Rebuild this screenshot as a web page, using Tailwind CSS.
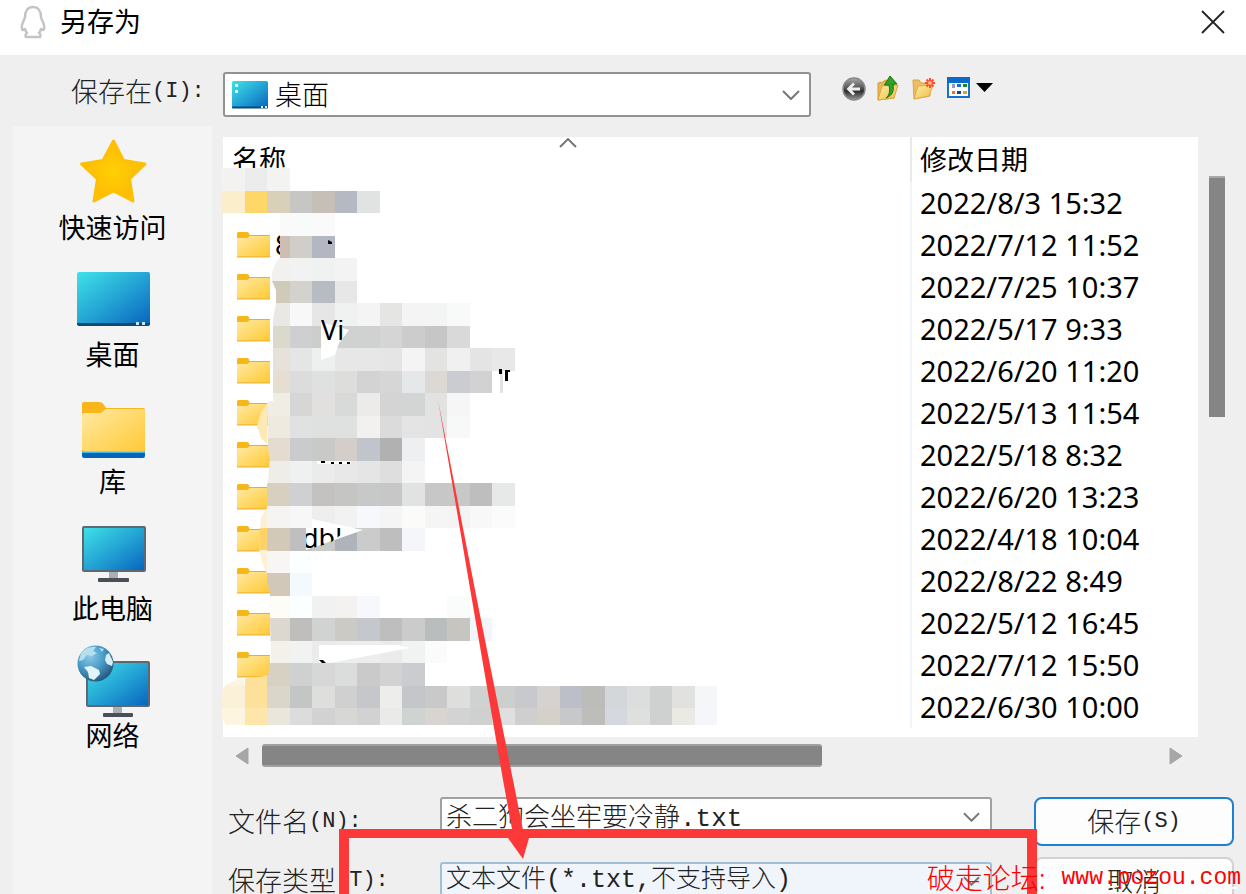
<!DOCTYPE html>
<html lang="zh-CN">
<head>
<meta charset="utf-8">
<title>另存为</title>
<script src="https://cdn.jsdelivr.net/npm/@tailwindcss/browser@4"></script>
</head>
<body class="bg-[#efefef]">
<div class="relative h-screen overflow-hidden bg-[#efefef] font-['Noto_Sans','Noto_Sans_CJK_SC',sans-serif] text-[27px] leading-8 text-black">

  <svg class="absolute size-0" aria-hidden="true">
    <defs>
      <linearGradient id="blue" x1="0" y1="0" x2="1" y2="1"><stop offset="0" stop-color="#40e2e8"/><stop offset=".5" stop-color="#24a5d5"/><stop offset="1" stop-color="#0763be"/></linearGradient>
      <linearGradient id="gold" x1="0" y1="0" x2="1" y2="1"><stop offset="0" stop-color="#ffe9a3"/><stop offset="1" stop-color="#ffc934"/></linearGradient>
      <radialGradient id="star"><stop offset="0" stop-color="#ffcf04"/><stop offset="1" stop-color="#fdbb06"/></radialGradient>
      <radialGradient id="globe" cx=".35" cy=".3" r=".75"><stop offset="0" stop-color="#8cc9e6"/><stop offset=".5" stop-color="#4a9cc8"/><stop offset="1" stop-color="#23567c"/></radialGradient>
      <linearGradient id="orb" x1="0" y1="0" x2="0" y2="1"><stop offset="0" stop-color="#aaa"/><stop offset=".45" stop-color="#555"/><stop offset=".6" stop-color="#2d2d2d"/><stop offset="1" stop-color="#999"/></linearGradient>
      <linearGradient id="leaf" x1="0" y1="0" x2="1" y2="1"><stop offset="0" stop-color="#fff0ae"/><stop offset="1" stop-color="#f0b93e"/></linearGradient>
      <symbol id="folder" viewBox="0 0 33 26"><path d="M0 1.500Q0 0 1.500 0H10q2 0 2.500 3H33V25H0Z" fill="#f6b71b"/><path d="M0 6h10l3-2h20v20.500H0Z" fill="url(#gold)"/><path d="M0 25h33" stroke="#eab543"/><path d="M12.500 3.500H33" stroke="#e9ad35"/></symbol>
    </defs>
  </svg>

  <header class="flex h-[55px] items-center bg-white pr-[21px] pb-3 pl-5">
    <svg class="h-[34px] w-[26px]" viewBox="0 0 26 34" fill="none" stroke="#c4c4c4" stroke-width="2.500" stroke-linejoin="round"><path d="M13 2C8 2 5 6 5 12c0 2-2 4-3 8-.5 3 0 5 1 5 1 .5 1.500-1 2-1 .5 2 1 3 2 4-2 1-2 4 0 4h12c2 0 2-3 0-4 1-1 1.500-2 2-4 .5 0 1 1.500 2 1 1 0 1.500-2 1-5-1-4-3-6-3-8 0-6-3-10-8-10Z"/></svg>
    <h1 class="ml-[14px] flex-1">另存为</h1>
    <button class="flex size-6 items-center justify-center" aria-label="关闭"><svg class="size-6" viewBox="0 0 24 24" stroke="#222" stroke-width="1.800"><path d="M1 1l22 22M23 1L1 23"/></svg></button>
  </header>

  <div class="flex h-[71px] items-start pt-[17px]">
    <label for="dir" class="ml-[71px] flex h-10 w-[152px] shrink-0 items-center font-light text-[#222]">保存在<span class="font-['Liberation_Mono',monospace] text-[22px]">(I):</span></label>
    <div class="relative h-[45px] max-w-[588px] flex-1">
      <select id="dir" class="size-full appearance-none rounded-[3px] border-2 border-[#929292] bg-white pl-[50px] font-light"><option>桌面</option></select>
      <svg class="pointer-events-none absolute top-[9px] left-[9px] h-7 w-9" viewBox="0 0 36 28"><rect width="36" height="27" rx="1.500" fill="url(#blue)"/><path d="M0 25.500h36v1a1 1 0 0 1-1 1H1a1 1 0 0 1-1-1Z" fill="#084b78"/><path d="M3 3h3v3H3ZM3 9h3v3H3ZM29 25h2v2h-2ZM33 25h2v2h-2Z" fill="#d9fbff"/></svg>
      <svg class="pointer-events-none absolute top-[18px] right-[11px] h-[10px] w-[18px]" viewBox="0 0 18 10" fill="none" stroke="#777" stroke-width="2"><path d="M1 1l8 8 8-8"/></svg>
    </div>
    <div class="ml-[30px] flex items-start gap-[10px] pt-[3px]">
      <button aria-label="后退"><svg class="size-[26px]" viewBox="0 0 26 26"><circle cx="13" cy="14" r="11" fill="url(#orb)" stroke="#8a8a8a" stroke-width="1.500"/><path d="M19 14H8M13 8.500L7.500 14l5.500 5.500" fill="none" stroke="#eee" stroke-width="2.800"/></svg></button>
      <button aria-label="上一级"><svg class="h-[26px] w-6" viewBox="0 0 24 26"><path d="M1 8l5-1 2-2 5 1 5 4-1 13-16 2Z" fill="#e8b651" stroke="#d59c31"/><path d="M1 25L5 11l16-1-4 13Z" fill="url(#leaf)" stroke="#dda73c"/><path d="M9 23c4-3 4-8 3-13H7.500L13 1l7 8h-4c1 7 0 11-7 14Z" fill="#2fa329" stroke="#15760f"/></svg></button>
      <button aria-label="新建文件夹"><svg class="size-[26px]" viewBox="0 0 26 26"><path d="M2 5h6l2 3h9v13L3 24Z" fill="#efbd5d" stroke="#dca444"/><path d="M3 24L7 11l15-1-4 11Z" fill="url(#leaf)" stroke="#e0ac44"/><path d="M19 3v10M14 8h10M15.500 4.500l7 7M22.500 4.500l-7 7" stroke="#ff4a32" stroke-width="2"/><circle cx="19" cy="8" r="2" fill="#ffb57a"/></svg></button>
      <button aria-label="视图" class="flex items-start"><svg class="h-[26px] w-12" viewBox="0 0 48 26"><rect x="1" y="3" width="21" height="19" fill="#fff" stroke="#1473d0" stroke-width="2"/><path d="M0 2h23v6H0Z" fill="#0a6cc9"/><path d="M5 9h3v4H5Z" fill="#8f9cc8"/><path d="M10 9h4v3h-4Z" fill="#1473d0"/><path d="M16 9h4v3h-4Z" fill="#178a25"/><path d="M5 16h3v3H5Z" fill="#fb6a32"/><path d="M10 16h4v3h-4Z" fill="#184693"/><path d="M16 16h4v3h-4Z" fill="#e2a120"/><path d="M29 8h17l-8.500 9Z" fill="#000"/></svg></button>
    </div>
  </div>

  <div class="flex">
    <nav class="ml-[13px] h-[768px] w-[199px] shrink-0 bg-[#f4f4f4] pt-[6px]">
      <ul class="flex flex-col gap-[15px]">
        <li><button class="flex w-full flex-col items-center"><svg class="size-20" viewBox="72 132 80 80"><path d="M112.500 141l10 19.500 21.500 3.500-15.500 15 3.500 22-19.500-10-19.500 10 3.500-22L80.500 164l21.500-3.500Z" fill="url(#star)" stroke="#fdc005" stroke-width="3" stroke-linejoin="round"/></svg>快速访问</button></li>
        <li><button class="flex w-full flex-col items-center"><svg class="size-20" viewBox="72 259 80 80"><rect x="76" y="272" width="73" height="53" rx="2" fill="url(#blue)"/><path d="M76 323h73v1a2 2 0 0 1-2 2H78a2 2 0 0 1-2-2Z" fill="#084b74"/><path d="M135 322h3v3h-3ZM141 322h3v3h-3Z" fill="#c6eaf8"/></svg>桌面</button></li>
        <li><button class="flex w-full flex-col items-center"><svg class="size-20" viewBox="72 386 80 80"><path d="M81 404q0-2 2-2h15c4 0 5 3 7 6h37q2 0 2 2v8H81Z" fill="#f8b51c"/><path d="M81 415q0-2 2-2h15c4 0 5-4 8-4h36q2 0 2 2v40q0 2-2 2H83q-2 0-2-2Z" fill="url(#gold)"/><path d="M81 451h63v4H81Z" fill="#42b9ea"/><path d="M83 451h59l2-1q0 2-2 2H83q-2 0-2-2Z" fill="#edbb37"/><path d="M81 453h63v3q0 2-2 2H83q-2 0-2-2Z" fill="#0665b8"/></svg>库</button></li>
        <li><button class="flex w-full flex-col items-center"><svg class="size-20" viewBox="72 513 80 80"><path d="M108 570h9v10h-9Z" fill="#a8afb7"/><rect x="97" y="578" width="31" height="4" rx="1" fill="#4a4f57"/><rect x="82" y="527" width="62" height="44" rx="1" fill="url(#blue)" stroke="#5f6870" stroke-width="2"/></svg>此电脑</button></li>
        <li><button class="flex w-full flex-col items-center"><svg class="size-20" viewBox="72 640 80 80"><path d="M112 705h9v10h-9Z" fill="#a8afb7"/><rect x="102" y="713" width="30" height="4" rx="1" fill="#4a4f57"/><rect x="86" y="662" width="62" height="44" rx="1" fill="url(#blue)" stroke="#5f6870" stroke-width="2"/><circle cx="94.500" cy="663.500" r="18" fill="url(#globe)"/><path d="M80 653c4-5 10-7 15-6l-3 4 4 2-5 3-5-1-4 5-4 1Z" fill="#b5deef"/><path d="M83 667l7-1 8 4 1 4-6 6-5-2-1-6Z" fill="#e4f4fa"/><path d="M105 655l3-2 4 9-1 4-5-2-2-4Z" fill="#d9eff8"/><path d="M98 648l5 1-2 3Z" fill="#b5deef"/></svg>网络</button></li>
      </ul>
    </nav>

    <main class="min-w-0 flex-1 pt-[11px] pl-[11px]">
      <div class="flex gap-[11px] pr-[21px]">
        <div class="relative h-[600px] flex-1 bg-white">
          <table class="w-full table-fixed border-collapse text-left">
            <colgroup><col><col class="w-[287px]"></colgroup>
            <thead><tr class="h-[45px]"><th class="p-0 pl-[9px] font-normal">名称</th><th class="border-l-2 border-[#e9e9e9] p-0 pl-2 font-normal">修改日期</th></tr></thead>
            <tbody id="files" class="text-[29px]"></tbody>
          </table>
          <svg class="absolute top-[1px] left-[336px] h-[10px] w-[18px]" viewBox="0 0 18 10" fill="none" stroke="#777" stroke-width="2"><path d="M1 9l8-8 8 8"/></svg>
          <svg class="pointer-events-none absolute top-0 left-0 h-[600px] w-[688px] overflow-visible" viewBox="223 137 688 600" font-family="Noto Sans" font-size="27">
            <defs>
              <clipPath id="edge"><path d="M222 167H290V190H730V727H235L226 725 222 718V692L226 684 240 679 260 677 268 675 269 668 271 660 270 618V592L267 583V505L266 490 268 480 270 458 268 448 267 402 273 401V320L276 303 276 290 272 281V272L276 262 280 258V213H222Z"/></clipPath>
              <clipPath id="v"><path d="M321 320h28l-7 8 7 2-10 13H321Z"/></clipPath>
              <clipPath id="d"><path d="M306 528H350L330 543 306 550Z"/></clipPath>
            </defs>
            <path d="M267 404l-6 8-4 14 4 12 6 6Z" fill="#fee8b3"/>
            <path d="M267 508l-6 10-2 30 3 14 5 12Z" fill="#fdf1d5"/><path d="M260 528h7v22h-8Z" fill="#fdd268"/>
            <text x="275" y="255">8</text>
            <g id="mosaic" clip-path="url(#edge)" shape-rendering="crispEdges"></g>
            <path d="M321 322l28 8-10 13-4 12-14 5Z" fill="#fff"/><text x="321" y="340" clip-path="url(#v)">Vi</text>
            <path d="M499 369h3v5h-3ZM505 370h3v11h-3Z"/><path d="M507 370h3v2h-3Z"/>
            <path d="M317 461h34v3H317Z" fill="#fff"/><path d="M321 461h4v2h-4ZM331 462h3v2h-3ZM339 462h3v2h-3ZM347 462h3v2h-3Z"/>
            <path d="M312 519l51 11-57 20v-22h6Z" fill="#fff"/><text x="302" y="548" clip-path="url(#d)">dbl</text>
            <path d="M319 645h79l12 3-80 15h-11Z" fill="#fff"/><path d="M319 660h4l3 3h-4ZM328 240l4 2v2h-4Z"/>
          </svg>
        </div>
        <div class="w-4 pt-[39px]"><div class="h-[241px] border-t-2 border-[#a8a8a8] bg-[#858585]"></div></div>
      </div>

      <div class="flex h-[60px] items-start pt-[7px] pr-[63px] pl-3">
        <svg class="mt-[3px] h-[18px] w-[14px]" viewBox="0 0 14 18" fill="#a6a6a6"><path d="M13 1v16L1 9Z" stroke="#a6a6a6" stroke-linejoin="round"/></svg>
        <div class="ml-[13px] h-[23px] w-[560px] rounded-[3px] border-y-2 border-[#a0a0a0] bg-[#858585]"></div>
        <svg class="mt-[3px] ml-auto h-[18px] w-[14px]" viewBox="0 0 14 18" fill="#a6a6a6"><path d="M1 1v16l12-8Z" stroke="#a6a6a6" stroke-linejoin="round"/></svg>
      </div>

      <form class="flex pr-3 font-light text-[#222]">
        <div class="grid flex-1 grid-cols-[217px_1fr] gap-y-[27px]">
          <label for="name" class="flex h-9 items-center pt-[14px] pl-[5px]">文件名<span class="font-['Liberation_Mono',monospace] text-[22px]">(N):</span></label>
          <div class="relative h-9">
            <input id="name" class="size-full rounded-[3px] border-2 border-[#a0a0a0] bg-white pl-1 font-['Liberation_Mono','Noto_Sans_CJK_SC',monospace] text-[26px]" value="杀二狗会坐牢要冷静.txt">
            <svg class="pointer-events-none absolute top-[15px] right-[12px] h-[10px] w-[17px]" viewBox="0 0 18 10" fill="none" stroke="#777" stroke-width="2"><path d="M1 1l8 8 8-8"/></svg>
          </div>
          <label for="type" class="flex h-9 items-center pt-[5px] pl-[5px]">保存类型<span class="font-['Liberation_Mono',monospace] text-[22px]">(T):</span></label>
          <div class="relative h-[45px]">
            <select id="type" class="h-9 w-full appearance-none rounded-t-[3px] border-2 border-b-0 border-[#a3bfd6] bg-[#eff5fb] pl-1 font-['Liberation_Mono','Noto_Sans_CJK_SC',monospace] text-[25px]"><option>文本文件(*.txt,不支持导入)</option></select>
            <svg class="pointer-events-none absolute top-[15px] right-[12px] h-[10px] w-[17px]" viewBox="0 0 18 10" fill="none" stroke="#777" stroke-width="2"><path d="M1 1l8 8 8-8"/></svg>
          </div>
        </div>
        <div class="ml-[42px] flex w-[200px] flex-col gap-[11px]">
          <button type="submit" class="flex h-[49px] items-center justify-center rounded-lg border-2 border-[#1f7fd0] bg-[#fdfdfd] font-light">保存<span class="font-['Liberation_Mono',monospace] text-[22px]">(S)</span></button>
          <button type="button" class="h-[49px] rounded-lg border-2 border-[#d2d2d2] bg-[#fdfdfd] font-light">取消</button>
        </div>
      </form>
    </main>
  </div>

  <svg class="pointer-events-none absolute top-0 left-0 h-[894px] w-[1246px]" viewBox="0 0 1246 894" fill="#fc3838">
    <path d="M339 894V829H1037V894H1027V838H349V894Z"/>
    <path d="M438 400L477 600 513 780 523 830 529 838 523 859 508 838 512 829 503 780 472 600Z"/>
  </svg>
  <p class="absolute -bottom-5 left-[1072px] whitespace-nowrap text-[28px] text-white">吾爱破解论坛</p>
  <p class="absolute right-[5px] bottom-0 flex items-center whitespace-nowrap font-light text-[28px] text-[#f00]">破走论坛:<a href="http://www.pozou.com" class="ml-4 font-['Liberation_Mono',monospace] text-[23px]">www.pozou.com</a></p>
</div>

<script>
const dates = ["2022/8/3 15:32","2022/7/12 11:52","2022/7/25 10:37","2022/5/17 9:33","2022/6/20 11:20","2022/5/13 11:54","2022/5/18 8:32","2022/6/20 13:23","2022/4/18 10:04","2022/8/22 8:49","2022/5/12 16:45","2022/7/12 15:50","2022/6/30 10:00"];
document.getElementById("files").innerHTML = dates.map((d, i) =>
  `<tr class="h-[42px]"><td class="p-0 pl-[14px]">${i > 0 && i < 12 ? '<svg class="h-[26px] w-[33px]"><use href="#folder"/></svg>' : ''}</td><td class="border-l-2 border-[#f0f5fb] p-0 pl-2 leading-8">${d}</td></tr>`).join("");

// Censored file names: [first column, colours...] for each mosaic row
const rows = [
 "0 f3f2f1 ececec f3f3f2",
 "0 fbeeca ffd768 d8d0b9 c6c6c5 c5bfb8 b5b9c1 e1e2e2",
 "2 fafafa f9fafa fafafa",
 "2 cdbdb3 d1cdc8 b2b7c1",
 "2 f1f1f0 f1f2f1 f0f1f1 f3f3f3",
 "2 cfcab9 d4d2cd b7bcc3 e7e7e7",
 "2 eae8e4 f8f8f8 e6e6e6 f0f2f2 f4f4f4 e5e5e3 f3f4f3 f3f5f4 f8f9f9",
 "2 dbd8cc cdcfd1 cdcdcb d0d2d1 d0d2d1 d5d5d5 cccccc c5c6c5 d9d9d9",
 "2 e6e2d9 e5e5e6 eef0f0 e7e7e7 e7e7e7 e5e5e5 f4f4f4 e3e3e1 f0f0f0 e4e4e4 e8e8e8",
 "2 e6ded0 dcdcdd dfe1e1 dddddc d3d3d4 d6d6d6 e5e8e8 dcd9d4 caccd1 d2d2d2",
 "2 f0ede5 d6d6d6 e1e0de d8dada ecebea d4d4d4 d3d5d4 e1e2e1 f6f6f6",
 "2 efeadf e1e1e1 dfe1e0 dee1e0 f2f1ef dadbda e4e4e4 e3e3e3 f7f8f8",
 "2 e4dccf c9cbcd c9c9c8 d4ceca c0c5cc b1b1b1 edeff1",
 "2 efede8 eff1f0 ebebeb e8e8e8 e5e5e5 dedede f4f4f4",
 "2 d7d0c0 ced0d1 c4c2c0 c5c5c4 c7c8c8 c7c7c7 e1e3e2 c6c7c6 c8c8c7 bebebe e7e8e8",
 "2 f5f4f2 f7f7f7 eeeeee f2f2f2 f6f8fb f5f5f5 fbfbfa f5f5f5 f5f4f4 f8f8f8 fbfbfb",
 "2 d3c9b9 bfbfbf c9cbcb afb4bb cbcbcb bebebe f4f6f9",
 "2 f7f6f5 fcffff",
 "2 d2c8b9 f3faff",
 "2 fdfcf7 fcffff f1f1f1 f3f2f1 f6f8fb ffffff ffffff ffffff fafbfb",
 "2 dcd8cf bfbebc d0d3d2 cccac5 c4c7cc bebebe cbcbcb babdbd c6c5bf f2f6fa",
 "2 f4f1eb f1f2f2 eaebea ededed ecedec ebebeb f1f3f2 fbfbfb",
 "1 fde09a d7d1c3 cfd1d0 d7d7d7 dadddc cacaca d2d2d2 cbcccf",
 "0 fbf1d9 fde09a dad7ca c3c6c5 dededd d0d0d0 c6c7ca ededeb c5c6ca c9c9ca dededc d0d2d1 cbcfce c8c9cc d5d2cf bcbfc7 bcbcbb d4d7d9 dcdddd ced1d0 e1e1df f4f6f8",
 "0 fef5e1 fee6aa ebe6dc dcdcdd d2d2d2 d7d7d5 d2d2d2 eaeae8 cfd3d1 d8d5d0 d3d3d3 cfd1d0 dfdfdf cfcfcf d5d0ca c6c8ca bfbdba d5d8de dfdfdd ced1d0 ebe9e4 f4f6f9"
];
const size = 22.5;
document.getElementById("mosaic").innerHTML = rows.map((r, y) => {
  const [first, ...colours] = r.split(" ");
  return colours.map((c, i) => `<rect x="${222 + (+first + i) * size}" y="${168 + y * size}" width="${size}" height="${y === 24 ? 17 : size}" fill="#${c}"/>`).join("");
}).join("") + '<path d="M500 370h3v23h-3Z" fill="#e1e4e4"/><path d="M222 676h22v10h-22Z" fill="#fef5e1"/>';
</script>
</body>
</html>
